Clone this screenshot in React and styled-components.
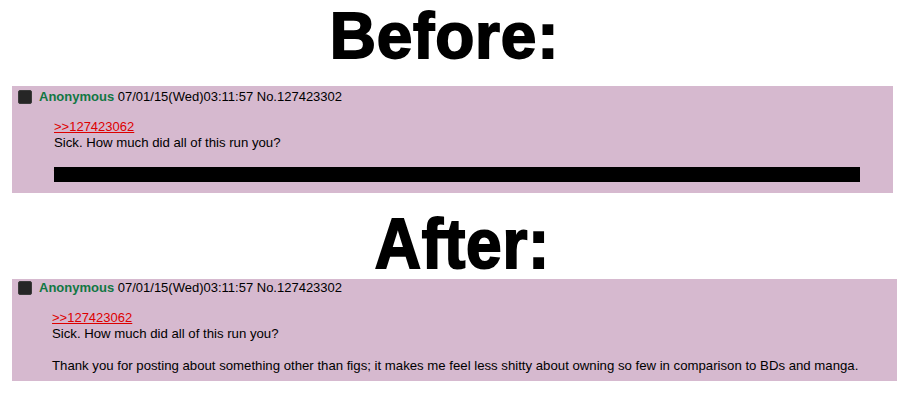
import React from "react";
import styled, { createGlobalStyle } from "styled-components";

const Global = createGlobalStyle`
body {
  margin: 0;
  background: #ffffff;
  font-family: "Liberation Sans", Arial, sans-serif;
}
`

const Page = styled.div`
width: 913px;
height: 404px;
overflow: hidden;
padding-top: 4px;
box-sizing: border-box;
`

const Title = styled.h1`
margin: 0;
height: 64px;
font-family: "Liberation Sans", Arial, sans-serif;
font-size: 64px;
line-height: 64px;
font-weight: 700;
letter-spacing: 0.8px;
-webkit-text-stroke: 1.8px #000;
color: #000;
text-align: center;
padding-left: ${p => (p.$shift > 0 ? p.$shift * 2 : 0)}px;
padding-right: ${p => (p.$shift < 0 ? -p.$shift * 2 : 0)}px;
span {
  display: inline-block;
  transform: scaleY(${p => p.$tall || 1});
  transform-origin: 50% 85%;
}
`

const Post = styled.div`
margin: ${p => p.$gap}px 0 0 12px;
width: ${p => p.$width}px;
background: #d6b9cf;
padding: ${p => p.$top}px 0 ${p => p.$bottom}px 6px;
box-sizing: border-box;
font-size: 13px;
line-height: 16px;
color: #000;
`

const Header = styled.div`
display: flex;
align-items: center;
gap: 7px;
height: 16px;
white-space: nowrap;
`

const Check = styled.span`
display: inline-block;
width: 12px;
height: 12px;
background: #262626;
border: 1px solid #3a3a3a;
border-radius: 2px;
box-sizing: content-box;
margin-top: -1px;
`

const Name = styled.span`
color: #117743;
font-weight: 700;
`

const Body = styled.blockquote`
margin: 14px 0 0 ${p => p.$indent}px;
padding: 0;
font-size: 13.2px;
white-space: nowrap;
`

const Quote = styled.a`
color: #dd0000;
font-size: 13px;
text-decoration: underline;
`

const Redacted = styled.span`
background: #000;
color: #000;
`

const comment =
  "Thank you for posting about something other than figs; it makes me feel less shitty about owning so few in comparison to BDs and manga."

function PostBlock({ hidden, ...rest }) {
  return (
    <Post {...rest}>
      <Header>
        <Check />
        <span>
          <Name>Anonymous</Name> 07/01/15(Wed)03:11:57 No.127423302
        </span>
      </Header>
      <Body $indent={rest.$indent}>
        <Quote>&gt;&gt;127423062</Quote>
        <br />
        Sick. How much did all of this run you?
        <br />
        <br />
        {hidden ? <Redacted>{comment}</Redacted> : comment}
      </Body>
    </Post>
  );
}

export default function App() {
  return (
    <>
      <Global />
      <Page>
        <Title $shift={-12}>
          <span>Before:</span>
        </Title>
        <PostBlock hidden $gap={18} $width={881} $top={3} $bottom={10} $indent={36} />
        <Title $shift={6} $tall={1.09} style={{ marginTop: 21 }}>
          <span>After:</span>
        </Title>
        <PostBlock $gap={1} $width={885} $top={1} $bottom={7} $indent={34} />
      </Page>
    </>
  );
}
